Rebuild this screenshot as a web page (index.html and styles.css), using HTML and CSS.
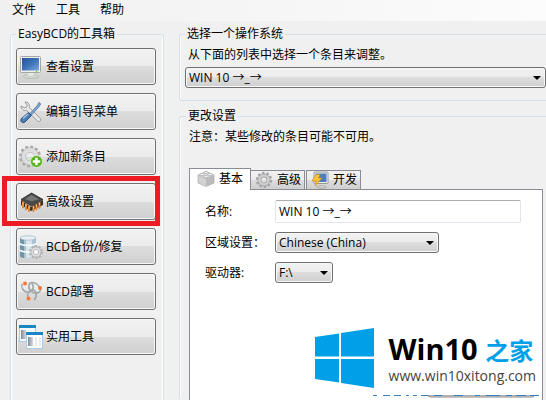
FILE: index.html
```html
<!DOCTYPE html>
<html lang="zh-CN">
<head>
    <meta charset="UTF-8">
    <meta name="viewport" content="width=device-width, initial-scale=1.0">
    <title>EasyBCD</title>
    <link rel="stylesheet" href="styles.css">
</head>
<body>
    <nav class="menu">
        <a href="#">文件</a>
        <a href="#">工具</a>
        <a href="#">帮助</a>
    </nav>
    <main class="main">
        <fieldset class="group toolbox">
            <legend>EasyBCD的工具箱</legend>
            <div class="tools">
                <button class="tool">
                    <svg viewBox="0 0 24 24">
                        <defs>
                            <linearGradient id="screen" x1="0" y1="0" x2="1" y2="1">
                                <stop offset="0" stop-color="#245396"/>
                                <stop offset="0.5" stop-color="#3c74b8"/>
                                <stop offset="1" stop-color="#7ba6d8"/>
                            </linearGradient>
                        </defs>
                        <ellipse cx="12" cy="21.5" rx="8" ry="2" fill="#d5d8d3" stroke="#a9ada6" stroke-width="0.6"/>
                        <path d="M9 17h6l1 4H8z" fill="#e9e9e7" stroke="#b5b7b2" stroke-width="0.5"/>
                        <rect x="1.5" y="1.5" width="20" height="16" rx="1" fill="#eef0ec" stroke="#a5a8a2"/>
                        <rect x="3" y="3" width="17" height="12.5" fill="url(#screen)"/>
                        <circle cx="17.5" cy="16.5" r="0.8" fill="#6ccf20"/>
                    </svg>
                    查看设置
                </button>
                <button class="tool">
                    <svg viewBox="0 0 24 24">
                        <path d="M2 6c0 4 3 5 5.500 4.300L18.500 21c2 1.500 4-.5 2.700-2.600L10.300 7.500C11 4 9 2 6 2l2.300 3.200-.8 2-2.200.6z" fill="#e8e9e7" stroke="#8c8f8a" stroke-width="0.9"/>
                        <path d="M20 2.300l1.800 1.600-2 3.200-7 7.600-1.600-1.500 7-7.600z" fill="#7fa6d2" stroke="#4d6f97" stroke-width="0.7"/>
                        <path d="M9.500 12.500l3 3-6.500 6.500c-2.500 2-5.500-.8-3.500-3.500z" fill="#4b7eb9" stroke="#24497a" stroke-width="0.9"/>
                        <path d="M4 18.500l5-4.500" stroke="#a8c8e8" stroke-width="1.200"/>
                    </svg>
                    编辑引导菜单
                </button>
                <button class="tool">
                    <svg viewBox="0 0 24 24">
                        <circle cx="11" cy="11.500" r="9.500" fill="none" stroke="#a9a9a9" stroke-width="3" stroke-dasharray="2.800 2.170"/>
                        <circle cx="11" cy="11.500" r="6.500" fill="none" stroke="#a9a9a9" stroke-width="5"/>
                        <circle cx="11" cy="11.500" r="6.500" fill="none" stroke="#dedede" stroke-width="3.800"/>
                        <circle cx="17.500" cy="16.500" r="6" fill="#58b41e" stroke="#e4f3d8" stroke-width="0.8"/>
                        <path d="M17.500 12.800v7.400M13.800 16.500h7.400" stroke="#fff" stroke-width="2.400"/>
                    </svg>
                    添加新条目
                </button>
                <button class="tool marked">
                    <svg viewBox="0 0 24 24">
                        <path d="M2 10l10 7 12-7v5l-12 6-10-6z" fill="#3d3029"/>
                        <path d="M4 12.500v5M7 14.500v5M10 16.500v4.500M14.500 16.500v4.500M17.500 15v4.500M20.500 13v5" stroke="#e7852c" stroke-width="2" stroke-linecap="round"/>
                        <path d="M4 12.500v2M7 14.500v2M10 16.500v2M14.500 16.500v2M17.500 15v2M20.500 13v2" stroke="#ffd48a" stroke-width="0.9"/>
                        <path d="M2 9.500L12.500 3 24 9.500 12.500 16z" fill="#4a4a4a" stroke="#262626" stroke-width="0.8"/>
                        <path d="M6 9l6.500-4 7.500 4.300-7.500 2z" fill="#777"/>
                    </svg>
                    高级设置
                </button>
                <button class="tool">
                    <svg viewBox="0 0 24 24">
                        <path d="M1 3v18c0 3 16 3 16 0V3z" fill="#a9c2d0"/>
                        <path d="M1 3v18c0 1 2 1.800 4 2V4z" fill="#6f94a9"/>
                        <path d="M7 5v18c2 .2 4 0 6-.4V5z" fill="#d7e5ec"/>
                        <path d="M1 8.500c2 2.500 14 2.500 16 0M1 15c2 2.500 14 2.500 16 0" fill="none" stroke="#f7fbfd" stroke-width="2"/>
                        <ellipse cx="9" cy="3" rx="8" ry="2.200" fill="#e7f0f4" stroke="#9fb8c5" stroke-width="0.7"/>
                        <circle cx="17" cy="17" r="6" fill="none" stroke="#b4b4b4" stroke-width="2" stroke-dasharray="2.200 1.570"/>
                        <circle cx="17" cy="17" r="3.800" fill="#f7f7f7" stroke="#a6a6a6" stroke-width="3.200"/>
                        <circle cx="17" cy="17" r="3.800" fill="none" stroke="#dedede" stroke-width="2"/>
                    </svg>
                    BCD备份/修复
                </button>
                <button class="tool">
                    <svg viewBox="0 0 24 24">
                        <g fill="none" stroke="#a5a9ab" stroke-width="1.800">
                            <path d="M3 4c-1 4 2 9 7 8s5-6 3-9"/>
                            <path d="M11 3c4-1 8 1 10 5s-4 7-8 4-4-6-2-9z"/>
                            <path d="M9 18c-1-4 0-7 4-8s6 6 2 10"/>
                        </g>
                        <path d="M3 6c1 3 4 5 7 5M14 4c3 0 5 2 6 4M10 15c1-3 4-2 5 0" fill="none" stroke="#dadddf" stroke-width="1"/>
                        <circle cx="6" cy="3.500" r="2" fill="#f47a38"/>
                        <circle cx="21" cy="8" r="2" fill="#f47a38"/>
                        <circle cx="9.500" cy="18.500" r="2" fill="#f47a38"/>
                    </svg>
                    BCD部署
                </button>
                <button class="tool">
                    <svg viewBox="0 0 24 24">
                        <defs>
                            <linearGradient id="pane">
                                <stop offset="0" stop-color="#7d8b98"/>
                                <stop offset="1" stop-color="#d5dce2"/>
                            </linearGradient>
                        </defs>
                        <rect x="0.500" y="0.500" width="16" height="16" fill="#f4f9fd" stroke="#a8cbe6"/>
                        <path d="M0 0h17v3H0z" fill="#1b86c4"/>
                        <path d="M2 5h5v9H2z" fill="url(#pane)"/>
                        <rect x="7.500" y="7.500" width="16" height="16" fill="#fcfdfe" stroke="#a8cbe6"/>
                        <path d="M7 7h17v3H7z" fill="#1b86c4"/>
                        <path d="M9 12h5v9H9z" fill="url(#pane)"/>
                        <path d="M16 12h2v9h-2zM20 12h2v9h-2z" fill="#e9ebed"/>
                    </svg>
                    实用工具
                </button>
            </div>
        </fieldset>
        <div class="content">
            <fieldset class="group system">
                <legend>选择一个操作系统</legend>
                <label class="hint" for="os">从下面的列表中选择一个条目来调整。</label>
                <span class="dropdown wide">
                    <select id="os"><option>WIN 10 →_→</option></select>
                </span>
            </fieldset>
            <fieldset class="group settings">
                <legend>更改设置</legend>
                <p class="hint">注意：某些修改的条目可能不可用。</p>
                <div class="tabs" role="tablist">
                    <button class="tab active" role="tab" aria-selected="true">
                        <svg viewBox="0 0 18 18">
                            <path d="M1 5l8 3.500v8L1 13z" fill="#d2d2d2"/>
                            <path d="M17 5l-8 3.500v8l8-3.500z" fill="#bcbcbc"/>
                            <path d="M1 5l8-3.500L17 5 9 8.500z" fill="#e6e6e6" stroke="#a8a8a8" stroke-width="0.6"/>
                            <g fill="#f6f6f6" stroke="#999" stroke-width="0.6">
                                <ellipse cx="9" cy="2.500" rx="2" ry="1.200"/>
                                <ellipse cx="5" cy="4.500" rx="2" ry="1.200"/>
                                <ellipse cx="13" cy="4.500" rx="2" ry="1.200"/>
                                <ellipse cx="9" cy="6.500" rx="2" ry="1.200"/>
                            </g>
                            <path d="M1 5v8l8 3.500 8-3.500V5" fill="none" stroke="#a0a0a0" stroke-width="0.6"/>
                        </svg>
                        基本
                    </button>
                    <button class="tab" role="tab" aria-selected="false">
                        <svg viewBox="0 0 18 18">
                            <circle cx="9" cy="9" r="7" fill="none" stroke="#a5a5a5" stroke-width="2.400" stroke-dasharray="2.500 1.900"/>
                            <circle cx="9" cy="9" r="4.500" fill="none" stroke="#a0a0a0" stroke-width="3.800"/>
                            <circle cx="9" cy="9" r="4.500" fill="none" stroke="#cecece" stroke-width="2.600"/>
                        </svg>
                        高级
                    </button>
                    <button class="tab" role="tab" aria-selected="false">
                        <svg viewBox="0 0 18 18">
                            <path d="M8 12h5l1 4H7z" fill="#d9d9d4"/>
                            <ellipse cx="10.500" cy="16" rx="5" ry="1.300" fill="#d5d5d0" stroke="#92928d" stroke-width="0.6"/>
                            <rect x="3" y="1" width="14" height="11.500" rx="0.800" fill="#eee" stroke="#85857f" stroke-width="0.8"/>
                            <rect x="4.500" y="2.500" width="11" height="8.500" fill="#4c7fc1"/>
                            <path d="M5 3.500h4L7.500 7H11l-7 8 1.500-5H1z" fill="#fbc43b" stroke="#d98e12" stroke-width="0.7"/>
                        </svg>
                        开发
                    </button>
                </div>
                <div class="panel">
                    <div class="row">
                        <label for="name">名称:</label>
                        <input id="name" type="text" value="WIN 10 →_→">
                    </div>
                    <div class="row">
                        <label for="locale">区域设置：</label>
                        <span class="dropdown locale">
                            <select id="locale"><option>Chinese (China)</option></select>
                        </span>
                    </div>
                    <div class="row">
                        <label for="drive">驱动器:</label>
                        <span class="dropdown drive">
                            <select id="drive"><option>F:\</option></select>
                        </span>
                    </div>
                </div>
            </fieldset>
        </div>
    </main>
    <div class="watermark">
        <div class="brand">
            <svg class="logo" viewBox="0 0 59 60">
                <path d="M0 9l24-3.500V28.500H0zM26 5l33-5v28.500H26zM0 31h24v23.500L0 51zM26 31h33v29l-33-5z" fill="#00a0e9"/>
            </svg>
            <div>
                <div class="brand-name">Win10 <span>之家</span></div>
                <div class="brand-url">www.win10xitong.com</div>
            </div>
        </div>
        <svg class="strip" viewBox="0 0 170 5">
            <path d="M56 0h106v1q0 1-2 1H59q-3 0-3-2z" fill="#ddd" stroke="#707070" stroke-width="0.8"/>
            <path d="M1 .5h4M11 .5h7M22 .5h7M34 .5h3M41 .5h4M49 .5h7M62 .5h8M82 .5h9M103 .5h5M114 .5h14M134 .5h6M144 .5h10M158 .5h9" stroke="#3580bd" stroke-width="1.200"/>
        </svg>
    </div>
</body>
</html>
```

FILE: styles.css
```css
* {
    margin: 0;
    padding: 0;
    box-sizing: border-box;
}

body {
    display: flex;
    flex-direction: column;
    position: relative;
    height: 100vh;
    overflow: hidden;
    background: #f0f0f0;
    color: #000;
    font-family: "Open Sans", "Noto Sans CJK SC", sans-serif;
    font-size: 12px;
    line-height: 16px;
}

button, select, input {
    font: inherit;
    color: inherit;
}

.menu {
    display: flex;
    gap: 20px;
    height: 21px;
    padding: 2px 12px;
    background: linear-gradient(to right, #f0f0f0, #fcfcfc);
}

.menu a {
    color: #000;
    text-decoration: none;
}

.main {
    display: flex;
    flex: 1;
    gap: 15px;
    min-height: 0;
    padding: 5px 0 0 10px;
}

.group {
    min-width: 0;
    border: 1px solid #d5dfe5;
    border-radius: 3px;
    box-shadow: inset 1px 0 #fff;
}

.group legend {
    padding: 0 2px;
    background: #f0f0f0;
}

/* Left toolbox */
.toolbox {
    flex: none;
    width: 154px;
    padding: 6px 7px 0 5px;
    border-bottom: none;
    border-radius: 3px 3px 0 0;
    box-shadow: inset 1px 0 #fff, inset -1px 0 #fff;
}

.tools {
    display: flex;
    flex-direction: column;
    gap: 8px;
}

.tool {
    display: flex;
    align-items: center;
    gap: 3px;
    position: relative;
    height: 37px;
    padding: 0 2px;
    border: 1px solid #707070;
    border-radius: 3px;
    background: linear-gradient(#f2f2f2, #ebebeb 50%, #dddddd 50%, #cfcfcf);
    box-shadow: inset 0 0 0 1px #f8f8f8;
    text-align: left;
}

.tool svg {
    width: 24px;
    height: 24px;
}

.marked::after {
    content: '';
    position: absolute;
    inset: -8px -5px -7px -15px;
    border: 5px solid #ed1c24;
}

/* Right side */
.content {
    display: flex;
    flex: 1;
    flex-direction: column;
    gap: 7px;
    min-width: 0;
}

.system, .settings {
    border-right: none;
    border-radius: 3px 0 0 3px;
}

.system {
    padding: 5px 0 12px 5px;
}

.settings {
    display: flex;
    flex: 1;
    flex-direction: column;
    min-height: 0;
    padding: 5px 3px 0 9px;
    border-bottom: none;
}

.settings legend {
    margin-left: -3px;
}

.hint {
    display: block;
    padding-left: 3px;
    margin-bottom: 4px;
}

.settings .hint {
    margin: 0 0 23px -3px;
}

.dropdown {
    display: block;
    position: relative;
}

.dropdown select {
    display: block;
    width: 100%;
    height: 21px;
    padding: 0 3px;
    border: 1px solid #707070;
    border-radius: 3px;
    background: linear-gradient(#f2f2f2, #ebebeb 50%, #dddddd 50%, #cfcfcf);
    box-shadow: inset 0 0 0 1px #f8f8f8;
    appearance: none;
}

.dropdown::after {
    content: '';
    position: absolute;
    top: 9px;
    right: 5px;
    border: 4px solid transparent;
    border-top-color: #000;
    border-bottom: none;
    pointer-events: none;
}

.locale {
    width: 164px;
}

.drive {
    width: 58px;
}

/* Tabs */
.tabs {
    display: flex;
    align-items: flex-end;
}

.tab {
    display: flex;
    align-items: center;
    gap: 4px;
    height: 19px;
    padding: 0 3px 0 4px;
    border: 1px solid #898c95;
    border-bottom: none;
    border-left: none;
    background: linear-gradient(#f2f2f2, #ebebeb 50%, #dddddd 50%, #cfcfcf);
}

.tab:last-child {
    margin-left: 1px;
    border-left: 1px solid #898c95;
}

.tab svg {
    width: 18px;
    height: 18px;
}

.tab.active {
    z-index: 1;
    height: 22px;
    margin-bottom: -1px;
    padding: 0 7px 2px 7px;
    border-left: 1px solid #898c95;
    background: #fff;
}

.panel {
    display: flex;
    flex: 1;
    flex-direction: column;
    gap: 9px;
    min-height: 0;
    padding: 10px 21px 0 15px;
    border: 1px solid #898c95;
    border-bottom: none;
    background: #fff;
}

.row {
    display: flex;
    align-items: center;
}

.row label {
    width: 70px;
}

.row input {
    flex: 1;
    min-width: 0;
    height: 23px;
    padding: 0 3px 2px;
    border: 1px solid #e2e3ea;
    border-top-color: #abadb3;
    border-radius: 2px;
    background: #fff;
}

/* Site mark in the corner */
.watermark {
    position: absolute;
    right: 4px;
    bottom: 0;
}

.brand {
    display: flex;
    align-items: center;
    gap: 15px;
    padding: 0 6px 7px 0;
    background: #fff;
}

.logo {
    width: 59px;
    height: 60px;
}

.brand-name {
    font-size: 29px;
    font-weight: 700;
    line-height: 34px;
    white-space: nowrap;
}

.brand-name span {
    color: #00a0e9;
    font-size: 24px;
}

.brand-url {
    color: #444;
    font-size: 14px;
    line-height: 16px;
}

.strip {
    display: block;
    width: 170px;
    height: 5px;
    margin-left: auto;
}
```
